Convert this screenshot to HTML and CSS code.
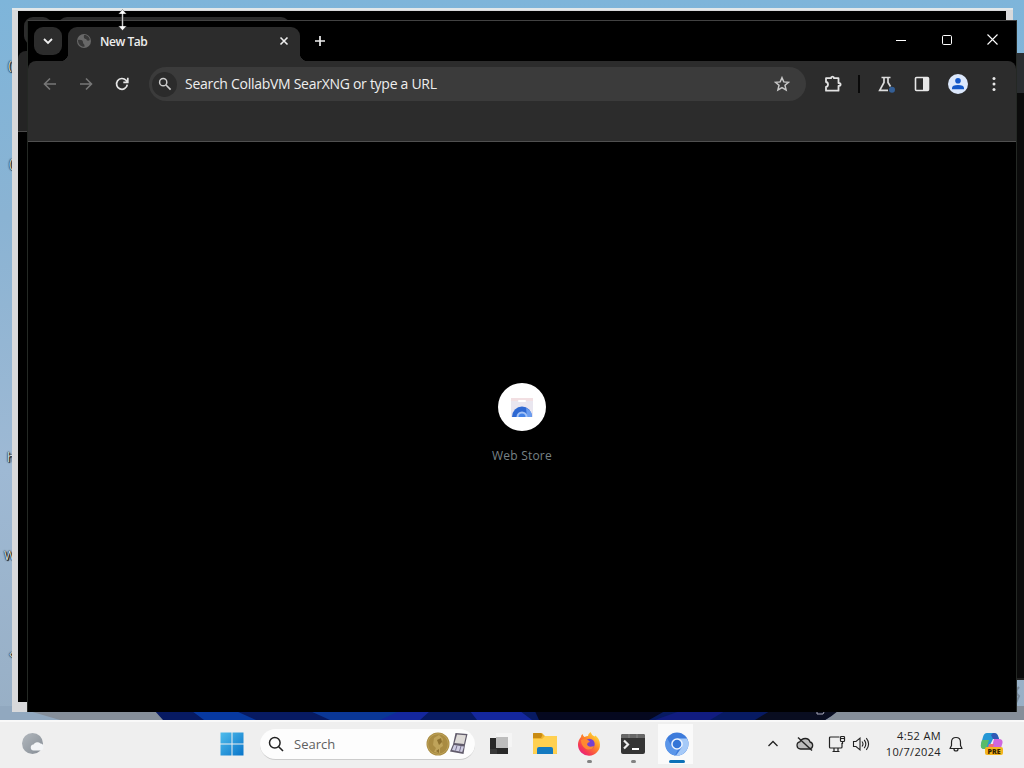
FILE: index.html
```html
<!DOCTYPE html>
<html lang="en">
  <head>
    <meta charset="utf-8" />
    <meta name="viewport" content="width=device-width, initial-scale=1" />
    <title>New Tab</title>
    <link rel="stylesheet" href="styles.css">
  </head>
  <body>
    <div class="desktop">
      <svg class="wallpaper" width="1024" height="720" viewBox="0 0 1024 720">
        <path d="M0 706H1024V720H0Z" fill="#858e99" />
        <path d="M0 706H12L60 720H0Z" fill="#91a8bf" />
        <path d="M154 710H838Q832 716 825 720H163Z" fill="#071a62" />
        <path d="M192 711h44l20 9h-52z" fill="#0739a0" />
        <path d="M310 711h90l20 9h-90z" fill="#0a3796" />
        <path d="M400 711h30l-10 9h-40zM470 711h50l12 9h-55z" fill="#14279d" />
        <path d="M535 711h130l-16 9h-110z" fill="#05081f" />
        <path d="M680 711h45l-15 9h-55z" fill="#111c80" />
        <path d="M770 711h68q-6 5-13 9h-70z" fill="#090d20" />
        <path d="M817 710v4h6l2-4" fill="none" stroke="#aab" />
        <path d="M1019 687q-5 5 0 9l-3 7" fill="none" stroke="#79899a" stroke-width="2" />
      </svg>
      <span class="label label-1">(</span>
      <span class="label label-2">(</span>
      <span class="label label-3">h</span>
      <span class="label label-4">W</span>
      <span class="label label-5">‹</span>

      <!-- windows behind the browser -->
      <div class="window window-light"></div>
      <div class="window window-side"><div class="side-bar"></div></div>
      <div class="window window-dark">
        <div class="back-strip">
          <div class="back-search"></div>
          <div class="back-tab"></div>
        </div>
        <div class="back-bar"></div>
      </div>

      <div class="window browser">
        <div class="tabstrip">
          <div class="tab-search">
            <svg width="12" height="12" viewBox="0 0 12 12"><path d="M2 4l4 4 4-4" fill="none" stroke="#eee" stroke-width="1.8" /></svg>
          </div>
          <div class="tab">
            <svg width="16" height="16" viewBox="0 0 16 16">
              <circle cx="8" cy="8" r="7" fill="#686868" />
              <path d="M2 7c3-.5 5 .3 5 2.3S9 11 8.500 13.800C5 14 2 11.500 2 7zM8 2c3-.5 5.500 2 5.800 5-1.800 1.300-3.300.5-3.500-1-1.600.3-3-.7-2.300-4z" fill="#383838" />
            </svg>
            <span class="tab-title">New Tab</span>
            <svg width="10" height="10" viewBox="0 0 10 10"><path d="M1.500 1.500l7 7m0-7l-7 7" stroke="#eee" stroke-width="1.600" /></svg>
          </div>
          <div class="new-tab">
            <svg width="12" height="12" viewBox="0 0 12 12"><path d="M6 1v10M1 6h10" stroke="#eee" stroke-width="1.700" /></svg>
          </div>
          <div class="controls">
            <div class="control"><svg width="10" height="10" viewBox="0 0 10 10"><path d="M0 5.500h10" stroke="#fff" /></svg></div>
            <div class="control"><svg width="10" height="10" viewBox="0 0 10 10"><rect x=".5" y=".5" width="9" height="9" rx="1.200" fill="none" stroke="#fff" /></svg></div>
            <div class="control"><svg width="12" height="12" viewBox="0 0 12 12"><path d="M.5.500l10 10m0-10l-10 10" stroke="#fff" stroke-width="1.100" /></svg></div>
          </div>
        </div>

        <div class="toolbar">
          <div class="tool"><svg width="16" height="16" viewBox="0 0 16 16"><path d="M14 8H3M8 2.500L2.500 8 8 13.500" fill="none" stroke="#777" stroke-width="1.600" /></svg></div>
          <div class="tool"><svg width="16" height="16" viewBox="0 0 16 16"><path d="M2 8h11M8 2.500L13.500 8 8 13.500" fill="none" stroke="#777" stroke-width="1.600" /></svg></div>
          <div class="tool"><svg width="16" height="16" viewBox="0 0 16 16"><path d="M13.300 8.700A5.400 5.400 0 1 1 12 4.300L13.500 6M13.800 1.800V6.300H9.300" fill="none" stroke="#e6e6e6" stroke-width="1.700" /></svg></div>
          <div class="omnibox">
            <div class="omnibox-icon"><svg width="14" height="14" viewBox="0 0 14 14"><circle cx="5.200" cy="5.200" r="3.600" fill="none" stroke="#ccc" stroke-width="1.500" /><path d="M8 8l4.600 4.600" stroke="#ccc" stroke-width="1.700" /></svg></div>
            <span class="omnibox-text">Search CollabVM SearXNG or type a URL</span>
            <svg width="16" height="16" viewBox="0 0 16 16"><path d="M8 1.700l1.800 4.200 4.700.4-3.500 3 1.100 4.600L8 11.500l-4.100 2.400L5 9.300l-3.500-3 4.700-.4z" fill="none" stroke="#c8c8c8" stroke-width="1.500" /></svg>
          </div>
          <div class="tool"><svg width="18" height="18" viewBox="0 0 18 18"><path d="M2 3.200H7Q7 1.600 8.500 1.600T10 3.200H14.500V8Q16.600 8.200 16.600 9.500T14.500 11V15.700H2V12Q4 11.700 4 9.500T2 7Z" fill="none" stroke="#e2e2e2" stroke-width="1.800" stroke-linejoin="round" /></svg></div>
          <div class="divider"></div>
          <div class="tool"><svg width="20" height="20" viewBox="0 0 20 20"><path d="M5.500 3.500h9M8 3.500V8.500L3.700 16.300H12M12 3.500V8.500L14.500 12.500" fill="none" stroke="#ddd" stroke-width="1.700" /><circle cx="16" cy="15.800" r="3" fill="#345f96" /></svg></div>
          <div class="tool"><svg width="16" height="16" viewBox="0 0 16 16"><rect x="1.500" y="1.500" width="13" height="13" rx="1" fill="none" stroke="#e8e8e8" stroke-width="1.600" /><path d="M9 2h5v12H9z" fill="#e8e8e8" /></svg></div>
          <div class="tool"><svg width="20" height="20" viewBox="0 0 20 20"><circle cx="10" cy="10" r="10" fill="#dce8fc" /><circle cx="10" cy="6.800" r="2.800" fill="#1458c8" /><path d="M4 15.300V14Q4 11 10 11T16 14V15.300Z" fill="#1458c8" /></svg></div>
          <div class="tool"><svg width="4" height="16" viewBox="0 0 4 16" fill="#e8e8e8"><circle cx="2" cy="2.600" r="1.500" /><circle cx="2" cy="8" r="1.500" /><circle cx="2" cy="13.400" r="1.500" /></svg></div>
        </div>

        <div class="page">
          <div class="shortcut">
            <svg width="22" height="22" viewBox="0 0 22 22">
              <path d="M0 2h22v19H0z" fill="#e9e6ef" />
              <path d="M0 2h22v3H0z" fill="#f2dfe2" />
              <rect x="7" y="4" width="8" height="2" rx="1" fill="#fff" />
              <path d="M1 21a10 10.500 0 0 1 20 0z" fill="#2e68d2" />
              <path d="M15 12a10 10 0 0 1 6 9h-5z" fill="#6b9df0" />
              <path d="M5.500 21a5.500 5.500 0 0 1 11 0z" fill="#a2c2f7" />
              <path d="M7.500 21a3.500 3.500 0 0 1 7 0z" fill="#4382e8" />
            </svg>
          </div>
          <span class="shortcut-name">Web Store</span>
        </div>
      </div>

      <!-- resize cursor -->
      <svg class="cursor" width="9" height="22" viewBox="0 0 9 22"><path d="M4.500.5L8.500 5H5.200V17H8.500L4.500 21.500.5 17H3.800V5H.5z" fill="#fff" stroke="#222" stroke-width=".4" /></svg>
    </div>

    <div class="taskbar">
      <div class="weather">
        <svg width="24" height="24" viewBox="0 0 24 24"><defs><linearGradient id="moon" x2="1" y2="1"><stop stop-color="#b2b8be" /><stop offset="1" stop-color="#858c94" /></linearGradient></defs><circle cx="11.500" cy="11.500" r="10.500" fill="url(#moon)" /><path d="M13 18.500a3 3 0 0 1-.5-6 4.500 4.500 0 0 1 7-1 3.600 3.600 0 0 1 .5 7z" fill="#f3f5f7" /></svg>
      </div>
      <div class="apps">
        <div class="app">
          <svg width="24" height="24" viewBox="0 0 24 24"><defs><linearGradient id="win" x2="1" y2="1"><stop stop-color="#50bdec" /><stop offset="1" stop-color="#0874c9" /></linearGradient></defs><path d="M.5.500H11.500V11.500H.5zM12.500.500H23.500V11.500H12.500zM.5 12.500H11.500V23.500H.5zM12.500 12.500H23.500V23.500H12.500z" fill="url(#win)" /></svg>
        </div>
        <div class="search">
          <svg width="16" height="16" viewBox="0 0 16 16"><circle cx="6.800" cy="6.800" r="5.300" fill="none" stroke="#222" stroke-width="1.500" /><path d="M10.700 10.700l4.300 4.300" stroke="#222" stroke-width="1.600" /></svg>
          <span class="search-text">Search</span>
          <svg width="43" height="24" viewBox="0 0 43 24">
            <circle cx="12" cy="12" r="11.500" fill="#a98b42" />
            <circle cx="12" cy="12" r="10.300" fill="none" stroke="#bda257" />
            <path d="M8 20l2-4-3-3 1-7 5-3 4 4-1 3 1 4-3 2v5z" fill="#bfa35a" />
            <path d="M11 8l4-2 1 4-3 3zM10 19l3-2v4z" fill="#8d702f" />
            <path d="M29.500 1L41.500 2 39 13 37.500 22 24 19.500 27 12.500z" fill="#625c6c" />
            <path d="M31 2.500L40 3.200 38 12 28.500 11z" fill="#dedbd8" />
            <path d="M28 13L38 14.500 36.200 20 26 18z" fill="#cfcde2" />
            <path d="M31 13.500l-1.500 5M35 14l-1.500 5.500" stroke="#77718f" />
          </svg>
        </div>
        <div class="app">
          <svg width="24" height="24" viewBox="0 0 24 24"><path d="M7 1h16v14H7z" fill="#f5f5f5" /><path d="M1 6h6v10h12v6H1z" fill="#292929" /><path d="M7 5h12v11H7z" fill="#bdbdbd" /><path d="M1 17h7v5H1z" fill="#393939" /></svg>
        </div>
        <div class="app">
          <svg width="26" height="24" viewBox="0 0 26 24"><path d="M1 1h9l3 3h11q1 0 1 1v17H1z" fill="#f0b52f" /><path d="M1 7h9l3-3h12v17q0 1-1 1H2q-1 0-1-1z" fill="#ffd050" /><path d="M1 2q0-1 1-1h7l1.500 2L9 6H1z" fill="#c98b13" /><path d="M5 22v-5q0-2 2-2h12q2 0 2 2v5z" fill="#147ac0" /></svg>
        </div>
        <div class="app">
          <svg width="24" height="24" viewBox="0 0 24 24">
            <defs><linearGradient id="fox" x1="1" y1="0" x2=".15" y2="1"><stop offset=".1" stop-color="#ffe63d" /><stop offset=".45" stop-color="#ff8b26" /><stop offset=".8" stop-color="#f53655" /><stop offset="1" stop-color="#e01d92" /></linearGradient></defs>
            <path d="M4 5q0-2 1.500-3 .5 2 2 3 2-1 3.500-1 0-2 2.500-4 1 3 4 4.500l1-1q4.500 4 4.500 9A11 11 0 0 1 1 13Q1 8 4 5z" fill="url(#fox)" />
            <circle cx="12.500" cy="12" r="5.200" fill="#7641d0" />
            <path d="M4 8q4-2 7 0l2 2q-2 0-3 2 1 4 7 2-2 5-8 3-5-3-5-9z" fill="#ff8930" />
          </svg>
          <i class="dot"></i>
        </div>
        <div class="app">
          <svg width="26" height="22" viewBox="0 0 26 22"><rect x="1" y="1" width="24" height="20" rx="2" fill="#353535" /><path d="M1 5V3q0-2 2-2h20q2 0 2 2v2z" fill="#686868" /><path d="M9 1v4m8-4v4" stroke="#888" /><path d="M4 7.500l4 4-4 4" fill="none" stroke="#eee" stroke-width="2.200" /><path d="M12 16h7" stroke="#fff" stroke-width="2" /></svg>
          <i class="dot"></i>
        </div>
        <div class="app app-active">
          <svg width="24" height="24" viewBox="0 0 24 24"><circle cx="12" cy="12" r="11.500" fill="#3d7bdb" /><path d="M12 6.500h10A11.500 11.500 0 0 1 11 23.500L17 15z" fill="#a6caf8" /><path d="M2 6l5 9q2 3 6 2.500l-3 6A11.500 11.500 0 0 1 2 6z" fill="#5b96e9" /><circle cx="12" cy="12" r="5.800" fill="#edf4ff" /><circle cx="12" cy="12" r="4.300" fill="#3475d7" /></svg>
          <i class="dot dot-active"></i>
        </div>
      </div>
      <div class="tray">
        <svg class="tray-chevron" width="12" height="12" viewBox="0 0 12 12"><path d="M1.500 8L6 3.500 10.500 8" fill="none" stroke="#222" stroke-width="1.300" /></svg>
        <svg class="tray-cloud" width="18" height="16" viewBox="0 0 18 16"><path d="M4.500 13a3.600 3.600 0 0 1-.7-7.100Q5.500 2.500 9.300 2.500T14 6a3.600 3.600 0 0 1-.2 7z" fill="#bcbcbc" stroke="#222" stroke-width="1.300" /><path d="M2 1.500l14 13" stroke="#222" stroke-width="1.400" /></svg>
        <svg class="tray-net" width="18" height="18" viewBox="0 0 18 18" fill="none" stroke="#222" stroke-width="1.200"><path d="M11.500 2H2.500Q1.500 2 1.500 3V12q0 1 1 1H13q1 0 1-1V8M6 13v3m4-3v3M4.500 16.500h7" /><rect x="12.500" y="1.500" width="4" height="5" rx=".8" /><path d="M12.500 3.500h4M14.500 6.500V9" /></svg>
        <svg class="tray-sound" width="18" height="16" viewBox="0 0 18 16" fill="none" stroke="#222" stroke-width="1.100"><path d="M1.500 5.500H4L8 2.200v11.600L4 10.500H1.500zM10 5.500q2 2.500 0 5M12.200 3.800q3.200 4.200 0 8.400M14.300 2.200q4.600 5.800 0 11.600" /></svg>
        <div class="clock">
          <span class="time">4:52 AM</span>
          <span class="date">10/7/2024</span>
        </div>
        <svg class="tray-bell" width="14" height="16" viewBox="0 0 14 16"><path d="M1 12.500l1.500-3V6.200Q2.500 1.500 7 1.500t4.500 4.700v3.300l1.500 3zM5 13q0 2 2 2t2-2" fill="none" stroke="#222" stroke-width="1.200" stroke-linejoin="round" /></svg>
        <svg class="copilot" width="26" height="26" viewBox="0 0 26 26">
          <path d="M8 2h7q3 0 4 3l1 3h-6l-2 4-3 6H6q-5 0-4-5l2-7q1-4 4-4z" fill="#2597d5" />
          <path d="M3 9h7l-3 9H5q-4 0-3-5z" fill="#58bc69" />
          <path d="M14 2h1q3 0 4 3l1 3h-6l-2-4z" fill="#3159b5" />
          <path d="M15 8h5q4 0 3.500 4L21 20h-9z" fill="#ce67df" />
          <path d="M10 13h5l-3 10H7z" fill="#ef6c75" />
          <rect x="6" y="16" width="18" height="8" rx="2" fill="#f4b51d" />
          <text class="pre" x="15" y="22.500" text-anchor="middle">PRE</text>
        </svg>
      </div>
    </div>
  </body>
</html>
```
FILE: styles.css
```css
* {
  box-sizing: border-box;
}

body {
  margin: 0;
  width: 1024px;
  height: 768px;
  overflow: hidden;
  font-family: "Open Sans", "Noto Sans", sans-serif;
}

svg {
  display: block;
  flex: none;
}

.desktop {
  position: relative;
  height: 720px;
  overflow: hidden;
  background: linear-gradient(#7eb5da, #8ab3d3 30%, #9eb9d4 65%, #98afc5);
}

.wallpaper,
.window,
.label,
.cursor {
  position: absolute;
}

.wallpaper {
  left: 0;
  top: 0;
}

.label {
  font-size: 12px;
  line-height: 16px;
  color: #dde6ee;
  text-shadow: 0 0 2px #000, 1px 1px 1px #000, 0 0 1px #000;
}

.label-1 {
  left: 8px;
  top: 58px;
}

.label-2 {
  left: 9px;
  top: 156px;
}

.label-3 {
  left: 7px;
  top: 450px;
}

.label-4 {
  left: 4px;
  top: 548px;
}

.label-5 {
  left: 9px;
  top: 646px;
}

.window-light {
  left: 12px;
  top: 8px;
  width: 1001px;
  height: 704px;
  background: #d8d9db;
  border-top: 2px solid #e2e8ea;
}

.window-dark {
  left: 18px;
  top: 11px;
  width: 988px;
  height: 691px;
  background: #000;
}

.back-strip {
  height: 40px;
  display: flex;
  gap: 6px;
  padding: 6px 6px 0;
}

.back-search {
  width: 28px;
  height: 28px;
  border-radius: 9px;
  background: #2c2c2c;
}

.back-tab {
  width: 232px;
  height: 34px;
  border-radius: 9px 9px 0 0;
  background: #2c2c2c;
}

.back-bar {
  height: 81px;
  background: #242424;
  border-bottom: 1px solid #4a4a4a;
  border-radius: 8px 0 0 0;
}

.window-side {
  left: 1012px;
  top: 53px;
  width: 12px;
  height: 627px;
  background: #0b0b0b;
  border-bottom: 2px solid #222;
}

.side-bar {
  height: 40px;
  background: #2a2d30;
}

.browser {
  left: 27px;
  top: 20px;
  width: 990px;
  height: 692px;
  display: flex;
  flex-direction: column;
  background: #000;
  border: 1px solid #242824;
  border-top-color: #424242;
  border-bottom: 0;
}

.tabstrip {
  height: 40px;
  display: flex;
  padding-left: 6px;
}

.tab-search {
  width: 28px;
  height: 28px;
  margin-top: 6px;
  display: flex;
  align-items: center;
  justify-content: center;
  border-radius: 9px;
  background: #2c2c2c;
}

.tab {
  position: relative;
  width: 232px;
  height: 34px;
  margin: 6px 0 0 6px;
  padding: 0 11px 6px 8px;
  display: flex;
  align-items: center;
  border-radius: 9px 9px 0 0;
  background: #2c2c2c;
}

/* flared feet of the active tab */
.tab::before,
.tab::after {
  content: "";
  position: absolute;
  bottom: 0;
  width: 8px;
  height: 8px;
}

.tab::before {
  left: -8px;
  background: radial-gradient(circle at 0 0, transparent 8px, #2c2c2c 8.5px);
}

.tab::after {
  right: -8px;
  background: radial-gradient(circle at 100% 0, transparent 8px, #2c2c2c 8.5px);
}

.tab-title {
  flex: 1;
  margin-left: 8px;
  font-size: 12px;
  font-weight: 600;
  letter-spacing: -0.45px;
  color: #eee;
}

.new-tab {
  width: 40px;
  display: flex;
  align-items: center;
  justify-content: center;
}

.controls {
  display: flex;
  margin-left: auto;
}

.control {
  width: 46px;
  height: 38px;
  display: flex;
  align-items: center;
  justify-content: center;
}

.toolbar {
  height: 81px;
  display: flex;
  align-items: flex-start;
  padding: 5px 4px 0;
  background: #2c2c2c;
  border-bottom: 1px solid #505050;
  border-radius: 8px 8px 0 0;
}

.tool {
  flex: none;
  width: 36px;
  height: 36px;
  display: flex;
  align-items: center;
  justify-content: center;
}

.omnibox {
  flex: 1;
  height: 34px;
  margin: 1px 9px 0;
  padding: 0 16px 0 3px;
  display: flex;
  align-items: center;
  border-radius: 17px;
  background: #3b3b3b;
}

.omnibox-icon {
  width: 25px;
  height: 25px;
  display: flex;
  align-items: center;
  justify-content: center;
  border-radius: 50%;
  background: #2b2b2b;
}

.omnibox-text {
  flex: 1;
  margin-left: 8px;
  padding-bottom: 2px;
  font-size: 14px;
  letter-spacing: -0.28px;
  color: #eee;
  white-space: nowrap;
}

.divider {
  width: 2px;
  height: 18px;
  margin: 9px 8px 0 7px;
  background: #090909;
}

.page {
  flex: 1;
  display: flex;
  flex-direction: column;
  align-items: center;
  padding-top: 241px;
}

.shortcut {
  width: 48px;
  height: 48px;
  display: flex;
  align-items: center;
  justify-content: center;
  border-radius: 50%;
  background: #fff;
}

.shortcut-name {
  margin-top: 16px;
  font-size: 12px;
  line-height: 18px;
  letter-spacing: 0.2px;
  color: #788286;
}

.cursor {
  left: 118px;
  top: 9px;
}

.taskbar {
  height: 48px;
  display: flex;
  align-items: center;
  padding-bottom: 2px;
  background: #efefef;
  border-top: 2px solid #f9f9f9;
}

.weather {
  width: 210px;
  padding-left: 21px;
}

.apps {
  display: flex;
  align-items: center;
}

.app {
  position: relative;
  width: 44px;
  height: 40px;
  display: flex;
  align-items: center;
  justify-content: center;
}

.search {
  width: 215px;
  height: 31px;
  margin: 0 4px 0 6px;
  padding: 0 6px 0 8px;
  display: flex;
  align-items: center;
  border-radius: 16px;
  background: #fdfdfd;
  border-bottom: 1px solid #ccc;
}

.search-text {
  flex: 1;
  margin-left: 10px;
  font-size: 13px;
  color: #606060;
}

.app-active {
  background: linear-gradient(90deg, transparent 3px, #fafafa 3px, #fafafa 38px, transparent 38px);
}

.dot {
  position: absolute;
  left: 20px;
  bottom: 1px;
  width: 5px;
  height: 3px;
  border-radius: 2px;
  background: #828282;
}

.dot-active {
  left: 14px;
  width: 16px;
  background: #0b71b8;
}

.tray {
  display: flex;
  align-items: center;
  margin-left: auto;
  padding-right: 19px;
}

.tray-cloud {
  margin-left: 17px;
}

.tray-net {
  margin-left: 14px;
}

.tray-sound {
  margin-left: 6px;
}

.clock {
  width: 71px;
  display: flex;
  flex-direction: column;
  align-items: flex-end;
  font-size: 11px;
  line-height: 16px;
  letter-spacing: 0.35px;
  color: #222;
}

.tray-bell {
  margin-left: 8px;
}

.copilot {
  margin-left: 16px;
}

.pre {
  font-size: 7px;
  font-weight: 800;
  fill: #332200;
}
```
